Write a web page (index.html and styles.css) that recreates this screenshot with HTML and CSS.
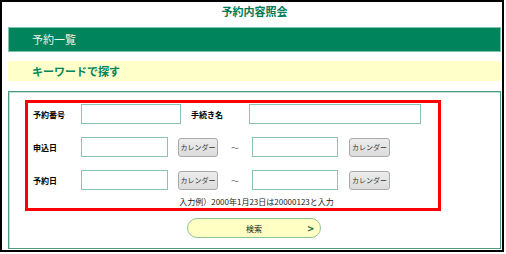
FILE: index.html
```html
<!DOCTYPE html>
<html lang="ja">

<head>
  <meta charset="UTF-8">
  <meta name="viewport" content="width=device-width, initial-scale=1.0">
  <title>予約内容照会</title>
  <link rel="stylesheet" href="styles.css">
</head>

<body>
  <div class="frame">
    <h1 class="page-title">予約内容照会</h1>
    <div class="menu-bar">予約一覧</div>
    <h2 class="section-title">キーワードで探す</h2>

    <div class="search-box">
      <div class="highlight">
        <div class="form-row">
          <label class="label">予約番号</label>
          <input type="text" class="text-input input-num">
          <label class="label label-second">手続き名</label>
          <input type="text" class="text-input input-name">
        </div>
        <div class="form-row">
          <label class="label">申込日</label>
          <input type="text" class="text-input input-date">
          <button class="cal-button">カレンダー</button>
          <span class="tilde">～</span>
          <input type="text" class="text-input input-date2">
          <button class="cal-button cal-second">カレンダー</button>
        </div>
        <div class="form-row">
          <label class="label">予約日</label>
          <input type="text" class="text-input input-date">
          <button class="cal-button">カレンダー</button>
          <span class="tilde">～</span>
          <input type="text" class="text-input input-date2">
          <button class="cal-button cal-second">カレンダー</button>
        </div>
        <p class="note">入力例）2000年1月23日は20000123と入力</p>
      </div>

      <div class="actions">
        <button class="search-button"><span>検索</span><span class="arrow">&gt;</span></button>
      </div>
    </div>
  </div>
</body>

</html>
```

FILE: styles.css
```css
body {
  margin: 0;
  font-family: "Noto Sans CJK JP", "Noto Sans", sans-serif;
  background-color: white;
}

.frame {
  box-sizing: border-box;
  width: 504px;
  height: 252px;
  border: 2px solid black;
  padding: 0 1px 0 6px;
}

.page-title {
  margin: 0;
  padding-top: 2px;
  font-size: 11px;
  line-height: 15px;
  font-weight: bold;
  color: #007a55;
  text-align: center;
}

.menu-bar {
  box-sizing: border-box;
  margin-top: 8px;
  height: 25px;
  border: 1px solid #7fc3a8;
  background-color: #00845c;
  color: #eef4ee;
  font-size: 11px;
  line-height: 23px;
  padding-left: 23px;
}

.section-title {
  margin: 9px 0 0 0;
  height: 20px;
  background-color: #ffffc9;
  color: #00845c;
  font-size: 11px;
  font-weight: bold;
  line-height: 20px;
  padding-left: 24px;
}

.search-box {
  box-sizing: border-box;
  margin-top: 10px;
  height: 158px;
  border: 1px solid #4f9c84;
  box-shadow: inset 1px 1px 0 #bfe0d3;
  padding-top: 8px;
}

.highlight {
  box-sizing: border-box;
  width: 416px;
  margin-left: 16px;
  border: 3px solid #ff0000;
  padding: 1px 0 0 5px;
}

.form-row {
  display: flex;
  align-items: center;
  height: 20px;
  margin-bottom: 13px;
}

.form-row:nth-child(3) {
  margin-bottom: 0;
}

.label {
  width: 48px;
  font-size: 8px;
  font-weight: bold;
  color: black;
}

.label-second {
  width: 58px;
  margin-left: 10px;
}

.text-input {
  box-sizing: border-box;
  height: 20px;
  border: 1px solid #8cc3b3;
  border-radius: 0;
  padding: 0 3px;
  background-color: white;
}

.input-num { width: 100px; }
.input-name { width: 172px; }
.input-date { width: 87px; }
.input-date2 { width: 86px; }

.cal-button {
  box-sizing: border-box;
  width: 40px;
  height: 19px;
  margin-left: 10px;
  padding: 0;
  border: 1px solid #a9a9a9;
  border-radius: 3px;
  background: linear-gradient(#ececec, #dcdcdc);
  color: #333;
  font-family: "Noto Sans CJK JP", sans-serif;
  font-size: 7px;
}

.cal-second {
  width: 41px;
  margin-left: 11px;
}

.tilde {
  width: 34px;
  text-align: center;
  font-size: 8px;
  color: #777;
}

.note {
  margin: 6px 0 0 0;
  padding-left: 42px;
  font-size: 8px;
  line-height: 12px;
  color: #222;
  text-align: center;
}

.actions {
  display: flex;
  justify-content: center;
  margin-top: 7px;
}

.search-button {
  box-sizing: border-box;
  position: relative;
  width: 134px;
  height: 20px;
  border: 1px solid #8fc596;
  border-radius: 10px;
  background-color: #ffffc4;
  color: #222;
  font-family: "Noto Sans CJK JP", sans-serif;
  font-size: 8px;
  padding: 0;
  margin-left: -1px;
}

.search-button .arrow {
  position: absolute;
  right: 6px;
  top: 1px;
  font-size: 11px;
  font-weight: bold;
  color: #2b6a4c;
}
```
